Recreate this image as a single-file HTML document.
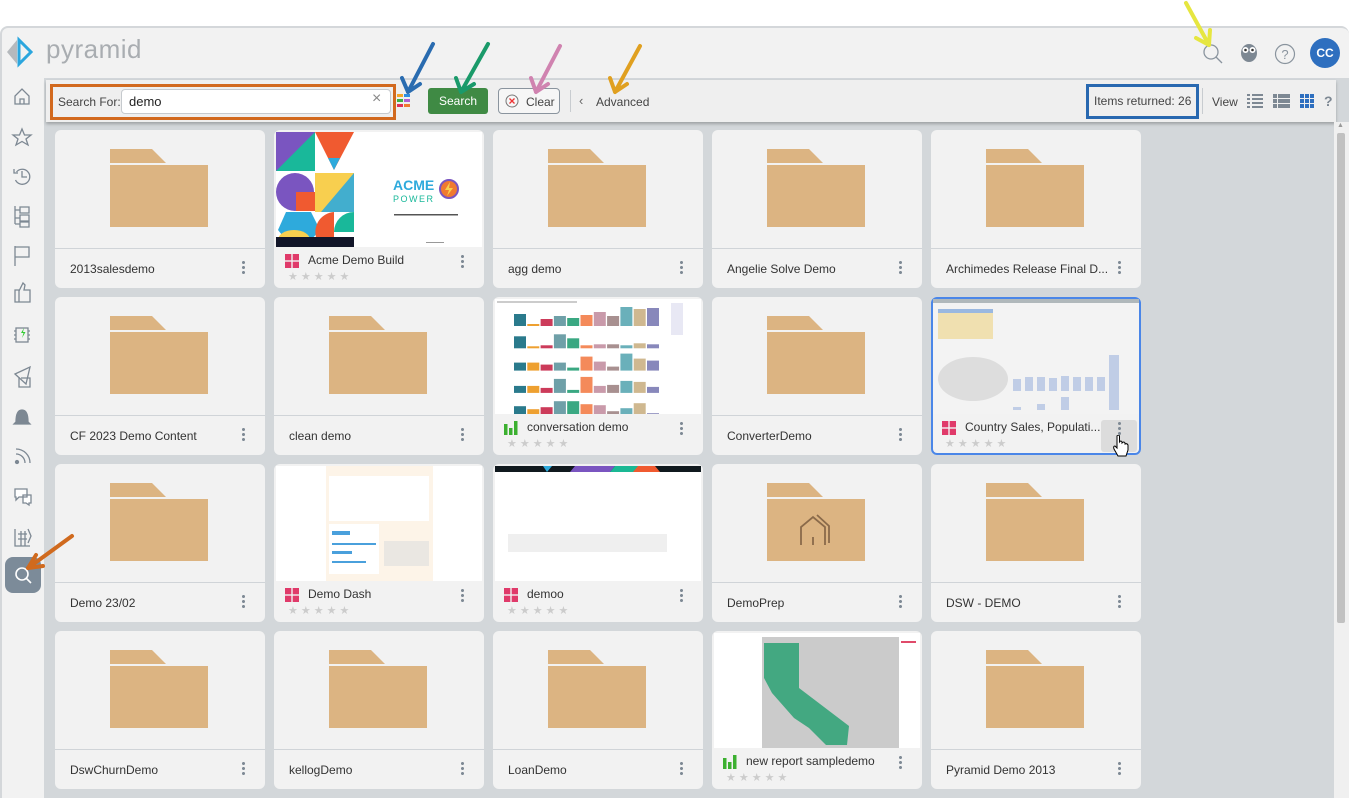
<!DOCTYPE html>
<html><head><meta charset="utf-8">
<style>
*{box-sizing:border-box;margin:0;padding:0}
body{width:1349px;height:798px;position:relative;background:#fff;font-family:"Liberation Sans",sans-serif;overflow:hidden;color:#333}
.abs{position:absolute}
.frame{left:0;top:26px;width:1349px;height:772px;background:#f2f2f2;border-top:2px solid #d4d7da;border-left:2px solid #d4d7da;border-radius:8px 8px 0 0}
.grid{left:44px;top:78px;width:1305px;height:720px;background:#d3d7da}
.tool{left:46px;top:80px;width:1290px;height:42px;background:#efefef;box-shadow:0 2px 3px rgba(0,0,0,.25)}
.card{position:absolute;width:210px;height:158px;background:#f2f2f2;border-radius:6px;overflow:hidden}
.card .img{position:absolute;left:2px;top:2px;width:206px;height:115px}
.card .line{position:absolute;left:0;top:118px;width:210px;height:1px;background:#d0d4d8}
.card .nm{position:absolute;left:15px;top:132px;font-size:12px;color:#333;white-space:nowrap;max-width:168px;overflow:hidden;text-overflow:ellipsis}
.card .nm2{position:absolute;left:34px;top:123px;font-size:12px;color:#333;white-space:nowrap;max-width:148px;overflow:hidden;text-overflow:ellipsis}
.dots{position:absolute;right:20px;top:130px;width:3px;height:15px;background:radial-gradient(circle,#7f8a95 1.4px,transparent 1.6px) 0 0/3px 5px}
.dots2{top:124px}
.stars{position:absolute;left:14px;top:140px;font-size:11px;color:#ccc;letter-spacing:3px}
.ico{position:absolute;left:11px;top:124px;width:14px;height:14px}
.folder{position:absolute;left:55px;top:19px}
</style></head><body>
<div class="abs frame"></div>
<!-- logo -->
<svg class="abs" style="left:4px;top:36px" width="40" height="32" viewBox="0 0 40 32"><path d="M13 4 L13 28 L3 16 Z" fill="#b5b9bd"/><path d="M15 4 L15 28 L27 16 Z" fill="none" stroke="#2ba6de" stroke-width="3"/></svg>
<div class="abs" style="left:46px;top:34px;font-size:26px;color:#a9adb1;letter-spacing:0.5px">pyramid</div>
<!-- header right -->
<svg class="abs" style="left:1202px;top:43px" width="22" height="22"><circle cx="9" cy="9" r="7" fill="none" stroke="#8a949e" stroke-width="1.3"/><line x1="14" y1="14" x2="20" y2="20" stroke="#8a949e" stroke-width="1.3"/></svg>
<svg class="abs" style="left:1239px;top:42px" width="20" height="22"><ellipse cx="10" cy="11" rx="8" ry="9" fill="#7d8893"/><circle cx="6.5" cy="8" r="3" fill="#fff"/><circle cx="13.5" cy="8" r="3" fill="#fff"/><circle cx="6.5" cy="8" r="1.3" fill="#333"/><circle cx="13.5" cy="8" r="1.3" fill="#333"/></svg>
<svg class="abs" style="left:1274px;top:43px" width="22" height="22"><circle cx="11" cy="11" r="9.5" fill="none" stroke="#8a949e" stroke-width="1.2"/><text x="11" y="16" text-anchor="middle" font-size="13" fill="#8a949e" font-family="Liberation Sans">?</text></svg>
<div class="abs" style="left:1310px;top:38px;width:30px;height:30px;border-radius:50%;background:#2e6fbf;color:#fff;font-size:12px;font-weight:bold;text-align:center;line-height:30px">CC</div>
<!-- sidebar -->
<svg class="abs" style="left:0;top:84px" width="44" height="510" viewBox="0 0 44 510" fill="none" stroke="#7d8893" stroke-width="1.3">
<path d="M15 20 V12 L22 5 L29 12 V20 Z M20 20 V15 H24 V20"/>
<path d="M22 45 L24.5 51 L31 51 L26 55 L28 61 L22 57.5 L16 61 L18 55 L13 51 L19.5 51 Z"/>
<path d="M16.5 88 A7.5 7.5 0 1 1 15.5 96 M14 85 V89 H18 M22 87 V93 H27"/>
<path d="M15 122 V140 M15 126 H20 M15 134 H20 M15 140 H20 M20 123 H29 V129 H20Z M20 131 H29 V137 H20Z M20 138 H29 V143 H20Z"/>
<path d="M15 162 V182 M15 163 H29 V173 H15"/>
<path d="M15 206 H19 V218 H15Z M19 207 L23 199 L25 201 L24 206 H30 V218 H19"/>
<rect x="16" y="244" width="12" height="14"/><path d="M14 247 H16 M14 251 H16 M14 255 H16 M28 247 H30 M28 251 H30 M28 255 H30"/>
<path d="M15 290 L30 283 L26 300 Z M19 293 V303 H30 V294 H21"/>
<path d="M16 338 Q16 326 22 326 Q28 326 28 338 L30 340 H14 Z" fill="#7d8893"/>
<path d="M16 365 A14 14 0 0 1 30 379 M16 370 A9 9 0 0 1 25 379" /><circle cx="17" cy="378" r="1.5" fill="#7d8893"/>
<path d="M15 405 H27 V413 H19 L16 416 V413 H15Z M23 411 H31 V419 H29 V421 L26 419 H23Z" fill="#fff"/>
<path d="M15 445 V462 H30 M18 450 H27 M18 455 H27 M21 447 V462 M25 447 V462 M28 445 L31 452 L28 459"/>
</svg>
<svg class="abs" style="left:20px;top:328px" width="6" height="10"><path d="M4 0 L1 5 H3.5 L2 10 L5.5 4 H3Z" fill="#3c3"/></svg>
<div class="abs" style="left:5px;top:557px;width:36px;height:36px;border-radius:8px;background:#7c8b99"></div>
<svg class="abs" style="left:13px;top:565px" width="20" height="20"><circle cx="9" cy="9" r="6" fill="none" stroke="#fff" stroke-width="1.6"/><line x1="13.5" y1="13.5" x2="18" y2="18" stroke="#fff" stroke-width="1.6"/></svg>

<div class="abs grid"></div>
<div class="abs tool"></div>
<!-- toolbar content -->
<div class="abs" style="left:50px;top:84px;width:346px;height:36px;border:3px solid #d2691e;"></div>
<div class="abs" style="left:58px;top:95px;font-size:12px;color:#444">Search For:</div>
<div class="abs" style="left:121px;top:89px;width:270px;height:25px;background:#fff;border:1px solid #c6cace;border-radius:4px"></div>
<div class="abs" style="left:129px;top:94px;font-size:13px;color:#222">demo</div>
<div class="abs" style="left:372px;top:90px;font-size:16px;color:#888">×</div>
<svg class="abs" style="left:397px;top:94px" width="16" height="16"><rect x="0" y="0" width="6" height="3" fill="#f4a62a"/><rect x="7" y="0" width="6" height="3" fill="#2e8ee0"/><rect x="0" y="5" width="6" height="3" fill="#3cb043"/><rect x="7" y="5" width="6" height="3" fill="#b05fd0"/><rect x="0" y="10" width="6" height="3" fill="#e0305a"/><rect x="7" y="10" width="6" height="3" fill="#f07a30"/></svg>
<div class="abs" style="left:428px;top:88px;width:60px;height:26px;background:#3f8a44;border-radius:3px;color:#fff;font-size:12px;text-align:center;line-height:26px">Search</div>
<div class="abs" style="left:498px;top:88px;width:62px;height:26px;border:1px solid #8a949e;border-radius:4px;background:#f6f6f6"></div>
<svg class="abs" style="left:504px;top:93px" width="16" height="16"><circle cx="8" cy="8" r="6" fill="none" stroke="#777" stroke-width="1"/><path d="M5.5 5.5 L10.5 10.5 M10.5 5.5 L5.5 10.5" stroke="#e33" stroke-width="1.3"/></svg>
<div class="abs" style="left:526px;top:95px;font-size:12px;color:#444">Clear</div>
<div class="abs" style="left:570px;top:90px;width:1px;height:22px;background:#c8ccd0"></div>
<div class="abs" style="left:579px;top:93px;font-size:13px;color:#666">‹</div>
<div class="abs" style="left:596px;top:95px;font-size:12px;color:#444">Advanced</div>
<div class="abs" style="left:1086px;top:84px;width:113px;height:35px;border:3px solid #2868b0"></div>
<div class="abs" style="left:1094px;top:94px;font-size:12px;color:#444">Items returned: 26</div>
<div class="abs" style="left:1202px;top:88px;width:1px;height:26px;background:#c8ccd0"></div>
<div class="abs" style="left:1212px;top:95px;font-size:12px;color:#444">View</div>
<svg class="abs" style="left:1247px;top:94px" width="16" height="14" fill="#7d8893"><rect x="0" y="0" width="3" height="2"/><rect x="5" y="0" width="11" height="2"/><rect x="0" y="4" width="3" height="2"/><rect x="5" y="4" width="11" height="2"/><rect x="0" y="8" width="3" height="2"/><rect x="5" y="8" width="11" height="2"/><rect x="0" y="12" width="3" height="2"/><rect x="5" y="12" width="11" height="2"/></svg>
<svg class="abs" style="left:1273px;top:94px" width="17" height="14" fill="#7d8893"><rect x="0" y="0" width="4" height="4"/><rect x="5" y="0" width="12" height="4"/><rect x="0" y="5" width="4" height="4"/><rect x="5" y="5" width="12" height="4"/><rect x="0" y="10" width="4" height="4"/><rect x="5" y="10" width="12" height="4"/></svg>
<svg class="abs" style="left:1300px;top:94px" width="14" height="14" fill="#2e6fbf"><rect x="0" y="0" width="4" height="4"/><rect x="5" y="0" width="4" height="4"/><rect x="10" y="0" width="4" height="4"/><rect x="0" y="5" width="4" height="4"/><rect x="5" y="5" width="4" height="4"/><rect x="10" y="5" width="4" height="4"/><rect x="0" y="10" width="4" height="4"/><rect x="5" y="10" width="4" height="4"/><rect x="10" y="10" width="4" height="4"/></svg>
<div class="abs" style="left:1324px;top:93px;font-size:14px;font-weight:bold;color:#7d8893">?</div>
<!-- scrollbar -->
<div class="abs" style="left:1334px;top:122px;width:15px;height:676px;background:#f0f0f0"></div>
<div class="abs" style="left:1337px;top:133px;width:8px;height:490px;background:#c1c1c1;border-radius:2px"></div>
<div class="abs" style="left:1337px;top:122px;font-size:7px;color:#999">▲</div>

<div id="cards"></div>
<script>
const F='<svg class="folder" width="100" height="80"><path d="M0 0 H42 L56 14 H0Z" fill="#dcb482"/><rect x="0" y="16" width="98" height="62" fill="#dcb482"/>';
const cols=[55,274,493,712,931],rows=[130,297,464,631];
const RD='<svg class="ico" viewBox="0 0 14 14"><rect x="0" y="0" width="6.3" height="6.3" fill="#e03a6a"/><rect x="7.7" y="0" width="6.3" height="6.3" fill="#e03a6a"/><rect x="0" y="7.7" width="6.3" height="6.3" fill="#e03a6a"/><rect x="7.7" y="7.7" width="6.3" height="6.3" fill="#e03a6a"/></svg>';
const GB='<svg class="ico" viewBox="0 0 14 14"><rect x="0" y="3" width="3.5" height="11" fill="#3cb030"/><rect x="5" y="7" width="3.5" height="7" fill="#3cb030"/><rect x="10" y="0" width="3.5" height="14" fill="#3cb030"/></svg>';
const items=[
['2013salesdemo'],['Acme Demo Build','acme',RD],['agg demo'],['Angelie Solve Demo'],['Archimedes Release Final D...'],
['CF 2023 Demo Content'],['clean demo'],['conversation demo','bars',GB],['ConverterDemo'],['Country Sales, Populati...','country',RD],
['Demo 23/02'],['Demo Dash','dash',RD],['demoo','demoo',RD],['DemoPrep','prep'],['DSW - DEMO'],
['DswChurnDemo'],['kellogDemo'],['LoanDemo'],['new report sampledemo','cal',GB],['Pyramid Demo 2013']];
const BH=[[12,2,7,10,8,11,14,10,19,17,18],[12,2,3,14,10,3,4,4,3,5,4],[8,8,6,8,3,14,9,4,17,12,10],[7,7,5,14,3,16,7,8,12,11,6],[9,6,8,14,14,11,10,4,7,12,2]];
function thumb(t){
 if(t=='acme')return '<svg class="img" viewBox="0 0 206 115"><rect width="206" height="115" fill="#fff"/><rect x="0" y="0" width="39" height="39" fill="#7a55c0"/><path d="M0 39 L39 0 V39Z" fill="#19b89a"/><path d="M39 0 H78 L58 38Z" fill="#f05a30"/><path d="M52 26 L64 26 L58 38Z" fill="#2eaadc"/><circle cx="19" cy="60" r="19" fill="#7a55c0"/><rect x="20" y="60" width="19" height="19" fill="#f05a30"/><rect x="39" y="41" width="39" height="39" fill="#f8cf4f"/><path d="M78 41 V80 H45Z" fill="#2eaadc" opacity=".9"/><path d="M10 80 H35 L44 98 L35 108 H10 L2 98Z" fill="#2eaadc"/><ellipse cx="18" cy="108" rx="16" ry="10" fill="#f8cf4f"/><path d="M58 80 A20 20 0 0 0 40 105 H58Z" fill="#f05a30"/><path d="M78 80 A20 20 0 0 0 58 100 H78Z" fill="#19b89a"/><rect x="0" y="105" width="78" height="10" fill="#121629"/><text x="117" y="58" font-size="14" font-weight="bold" fill="#2eaadc" font-family="Liberation Sans">ACME</text><text x="117" y="70" font-size="9" fill="#19b89a" letter-spacing="1.5" font-family="Liberation Sans">POWER</text><circle cx="173" cy="57" r="9" fill="#f07a30" stroke="#7a55c0" stroke-width="2"/><path d="M174 50 L169 58 H173 L171 64 L177 56 H173Z" fill="#f8cf4f"/><rect x="118" y="82" width="64" height="1.5" fill="#555"/><rect x="150" y="110" width="18" height="1" fill="#999"/></svg>';
 if(t=='bars'){let s='<svg class="img" viewBox="0 0 206 115"><rect width="206" height="115" fill="#fff"/><rect x="2" y="2" width="80" height="2" fill="#ccc"/>';const c=['#2a7a8c','#eea030','#cc3b5a','#6fa0a8','#3aa882','#f48a5a','#c99aaa','#a89090','#6ab0ba','#cfb890','#8888bb'];for(let r=0;r<5;r++){for(let i=0;i<11;i++){let h=BH[r][i];s+=`<rect x="${19+i*13.3}" y="${27+r*22.3-h}" width="12" height="${h}" fill="${c[i]}"/>`}}s+='<rect x="176" y="4" width="12" height="32" fill="#e8e8f4"/></svg>';return s}
 if(t=='country')return '<svg class="img" viewBox="0 0 206 115"><rect width="206" height="115" fill="#f3f3f3"/><rect x="0" y="0" width="206" height="4" fill="#b0b8bb"/><rect x="5" y="10" width="55" height="30" fill="#f0e0b0"/><rect x="5" y="10" width="55" height="4" fill="#9ab8e0"/><ellipse cx="40" cy="80" rx="35" ry="22" fill="#ddd"/><rect x="80" y="80" width="8" height="12" fill="#c0cde6"/><rect x="92" y="78" width="8" height="14" fill="#c0cde6"/><rect x="104" y="78" width="8" height="14" fill="#c0cde6"/><rect x="116" y="79" width="8" height="13" fill="#c0cde6"/><rect x="128" y="77" width="8" height="15" fill="#c0cde6"/><rect x="140" y="78" width="8" height="14" fill="#c0cde6"/><rect x="152" y="78" width="8" height="14" fill="#c0cde6"/><rect x="164" y="78" width="8" height="14" fill="#c0cde6"/><rect x="176" y="56" width="10" height="36" fill="#c0cde6"/><rect x="80" y="108" width="8" height="3" fill="#c0cde6"/><rect x="104" y="105" width="8" height="6" fill="#c0cde6"/><rect x="128" y="98" width="8" height="13" fill="#c0cde6"/><rect x="176" y="85" width="10" height="26" fill="#c0cde6"/></svg>';
 if(t=='dash')return '<svg class="img" viewBox="0 0 206 115"><rect width="206" height="115" fill="#fff"/><rect x="50" y="0" width="107" height="115" fill="#fdf4e8"/><rect x="53" y="10" width="100" height="45" fill="#fff"/><rect x="53" y="58" width="50" height="50" fill="#fff"/><rect x="56" y="65" width="18" height="4" fill="#4aa0dc"/><rect x="56" y="77" width="44" height="2" fill="#4aa0dc"/><rect x="56" y="85" width="20" height="3" fill="#4aa0dc"/><rect x="56" y="95" width="34" height="2" fill="#4aa0dc"/><rect x="108" y="75" width="45" height="25" fill="#ddd" opacity=".6"/></svg>';
 if(t=='demoo')return '<svg class="img" viewBox="0 0 206 115"><rect width="206" height="115" fill="#fff"/><rect width="206" height="6" fill="#10191e"/><path d="M48 0 H57 L52 6Z" fill="#2eaadc"/><path d="M75 6 L80 0 H120 L115 6Z" fill="#7a55c0"/><path d="M115 6 L120 0 H150 L160 6Z" fill="#1ab894"/><path d="M138 6 L143 0 H160 L165 6Z" fill="#f05a30"/><rect x="13" y="68" width="159" height="18" fill="#efefef"/></svg>';
 if(t=='cal')return '<svg class="img" viewBox="0 0 206 115"><rect width="206" height="115" fill="#fff"/><rect x="48" y="4" width="137" height="111" fill="#cbcbcb"/><path d="M50 10 H85 V55 L135 93 L133 112 L112 112 L95 95 L80 85 L58 60 L50 45Z" fill="#43a881"/><rect x="187" y="8" width="15" height="2" fill="#e04a6a"/></svg>';
 return '';
}
let h='';
items.forEach((it,i)=>{const x=cols[i%5],y=rows[Math.floor(i/5)];
 const sel=it[1]=='country';
 h+=`<div class="card" style="left:${x}px;top:${y}px;${sel?'outline:2px solid #4a86e8;outline-offset:-2px;':''}">`;
 if(it[1]&&it[1]!='prep'){h+=thumb(it[1])+it[2]+`<div class="nm2">${it[0]}</div><div class="stars">★★★★★</div>`;
  if(sel)h+='<div style="position:absolute;left:170px;top:123px;width:36px;height:32px;background:#dcdcdc;border-radius:3px"></div>';
  h+='<div class="dots dots2"></div>';}
 else{h+=F+(it[1]=='prep'?'<path d="M34 62 V44 L46 34 L58 44 V62 M46 54 V62 M50 32 L62 43 V60" fill="none" stroke="#8a6a4a" stroke-width="1.8"/>':'')+'</svg><div class="line"></div>'+`<div class="nm">${it[0]}</div><div class="dots"></div>`;}
 h+='</div>';});
document.getElementById('cards').innerHTML=h;
</script>
<svg class="abs" style="left:1112px;top:435px" width="18" height="24"><path d="M5 1 V13 L3 11 Q1 11 2 14 L6 21 H14 L16 15 V10 Q15 8 13 9 V8 Q12 6 10 8 V7 Q9 5 7.5 7 V1 Q6 -1 5 1Z" fill="#fff" stroke="#000" stroke-width="1"/></svg>
<svg class="abs" style="left:0;top:0" width="1349" height="798">
<g stroke-width="4" stroke-linecap="round" fill="none">
<path d="M433 44 L408 92 M408 92 L402 78 M408 92 L420 84" stroke="#2a6cb0"/>
<path d="M488 44 L461 92 M461 92 L456 78 M461 92 L474 84" stroke="#1a9a6a"/>
<path d="M560 46 L536 92 M536 92 L531 78 M536 92 L548 84" stroke="#d083b0"/>
<path d="M640 46 L615 92 M615 92 L610 78 M615 92 L627 84" stroke="#e0a020"/>
<path d="M1186 3 L1209 45 M1209 45 L1196 38 M1209 45 L1210 30" stroke="#e6e640"/>
<path d="M72 536 L28 568 M28 568 L36 555 M28 568 L43 566" stroke="#d06a1e"/>
</g></svg>
</body></html>
